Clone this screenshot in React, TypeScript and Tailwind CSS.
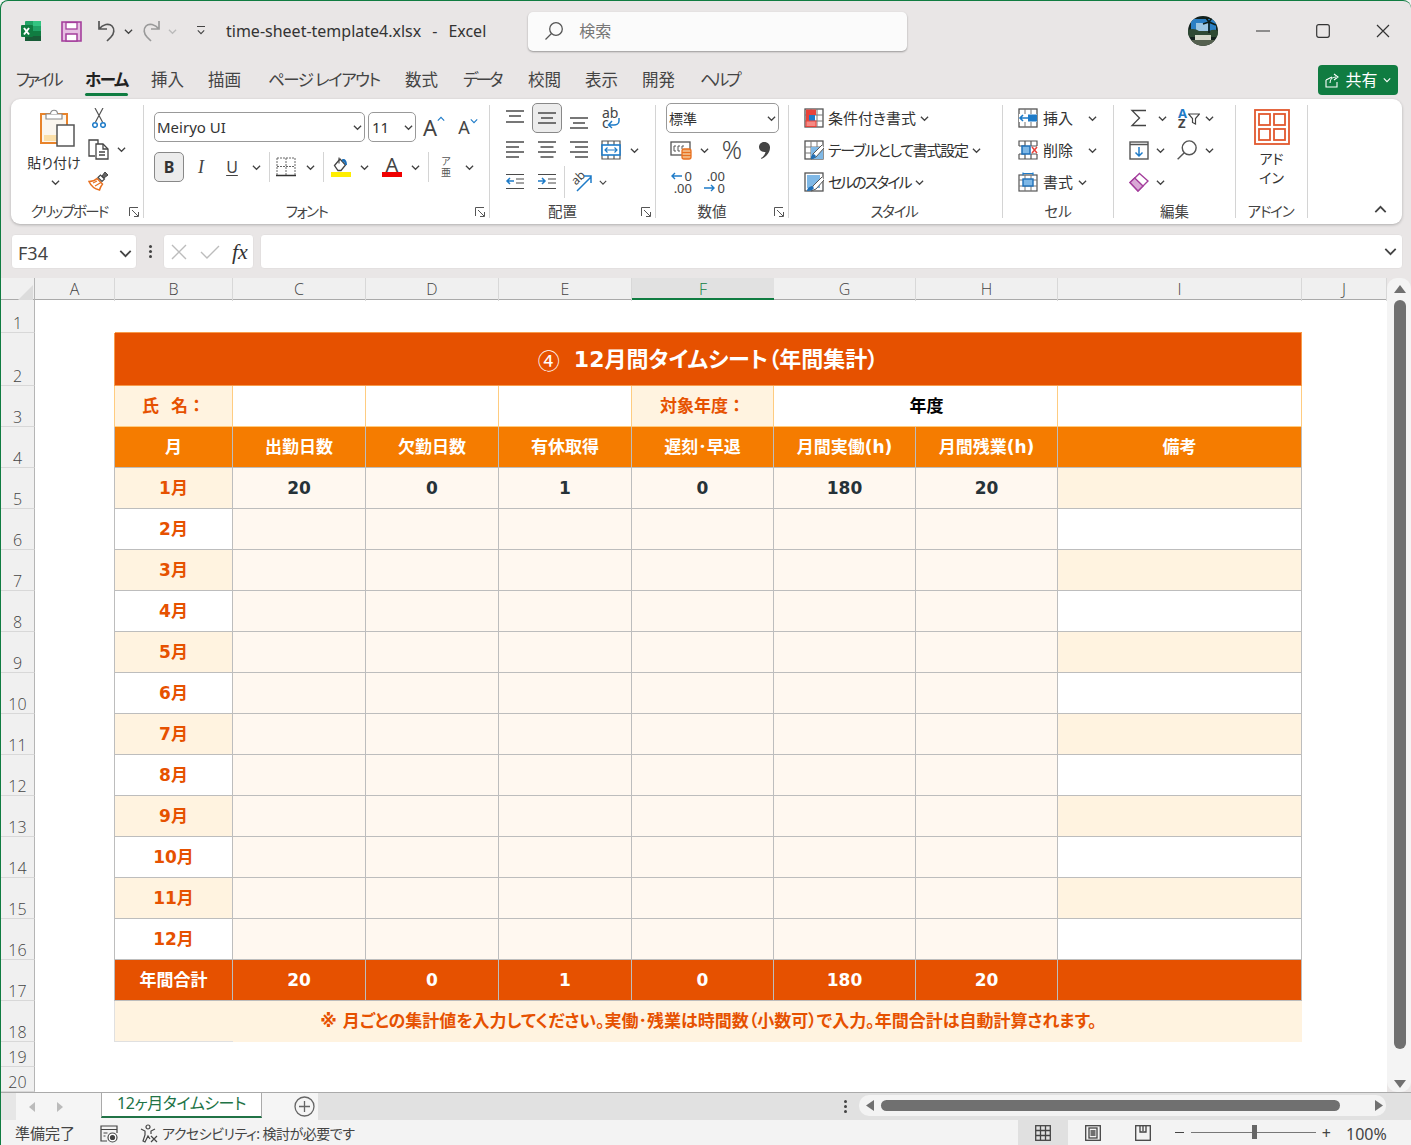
import React from 'react';

const gridCols = 'grid grid-cols-[34px_80px_118px_133px_133px_133px_142px_142px_142px_244px_85px]';
const cellFont = "font-['DejaVu_Sans','Noto_Sans_CJK_JP',sans-serif] font-bold";

const Chev = ({ up = false, w = 9, color = '#444' }: { up?: boolean; w?: number; color?: string }) => (
  <svg width={w} height={w} viewBox="0 0 10 10" fill="none" stroke={color} strokeWidth="1.4">
    <path d={up ? 'M1 7l4-4 4 4' : 'M1 3l4 4 4-4'} />
  </svg>
);

const Launcher = () => (
  <svg width="10" height="10" viewBox="0 0 10 10" fill="none" stroke="#555" strokeWidth="1">
    <path d="M.5 9V.5H9M3 3l6 6M5 9.5h4.500V5" />
  </svg>
);

const Lines = ({ rows }: { rows: [number, number, number][] }) => (
  <svg width="20" height="20" viewBox="0 0 20 20" stroke="#4a4a4a" strokeWidth="1.3">
    {rows.map(([y, x, w], i) => (
      <path key={i} d={`M${x} ${y}h${w}`} />
    ))}
  </svg>
);

const ExcelLogo = () => (
  <svg width="22" height="22" viewBox="0 0 22 22">
    <rect x="5" y="1" width="16" height="20" rx="1" fill="#21a366" />
    <rect x="13" y="1" width="8" height="5" fill="#33c481" />
    <rect x="13" y="11" width="8" height="5" fill="#107c41" />
    <rect x="5" y="11" width="8" height="5" fill="#185c37" />
    <rect x="5" y="16" width="16" height="5" fill="#185c37" />
    <rect x="1" y="5" width="12" height="12" rx="1" fill="#107c41" />
    <path d="M4 8l5 6.500M9 8l-5 6.500" stroke="#fff" strokeWidth="2" />
  </svg>
);

const SaveIcon = () => (
  <svg width="21" height="21" viewBox="0 0 21 21">
    <path d="M1 1h19v19H1z" fill="#e6bfe2" stroke="#a43e9c" strokeWidth="1.600" />
    <rect x="5" y="1.500" width="11" height="6.500" fill="#fff" stroke="#a43e9c" strokeWidth="1.300" />
    <rect x="5" y="13" width="11" height="7" fill="#fff" stroke="#a43e9c" strokeWidth="1.500" />
  </svg>
);

const Undo = ({ c }: { c: string }) => (
  <svg width="20" height="22" viewBox="0 0 20 22" fill="none" stroke={c} strokeWidth="1.700">
    <path d="M2 1v8h8M2 9c4-5 10-6 13-3 3 3 2 8-1 11l-4 4" />
  </svg>
);

const Redo = ({ c }: { c: string }) => (
  <svg width="20" height="22" viewBox="0 0 20 22" fill="none" stroke={c} strokeWidth="1.700">
    <path d="M18 1v8h-8M18 9c-4-5-10-6-13-3-3 3-2 8 1 11l4 4" />
  </svg>
);

const Magnifier = ({ size = 20, c = '#555' }: { size?: number; c?: string }) => (
  <svg width={size} height={size} viewBox="0 0 20 20" fill="none" stroke={c} strokeWidth="1.300">
    <circle cx="12" cy="8" r="6.300" />
    <path d="M7.500 12.500L1.500 18.500" />
  </svg>
);

const Avatar = () => (
  <svg width="30" height="30" viewBox="0 0 30 30">
    <clipPath id="av"><circle cx="15" cy="15" r="15" /></clipPath>
    <g clipPath="url(#av)">
      <rect width="30" height="30" fill="#14231f" />
      <rect x="3" y="3" width="25" height="13" fill="#2b7fc4" />
      <rect x="8" y="7" width="12" height="8" fill="#9cc6e2" />
      <path d="M0 14c5-2 8-1 11 1h10c3-1 6-2 9 0v6H0z" fill="#2e4a34" />
      <rect x="7" y="19" width="16" height="5" fill="#d5d8ca" />
      <path d="M3 24h24v6H3z" fill="#55604f" />
      <path d="M21 17V6M21 6l-6 2M21 6l7 3M21 6l3-4M21 6l-3-4" stroke="#0d1c16" strokeWidth="1.600" />
    </g>
  </svg>
);

const ShareIcon = () => (
  <svg width="15" height="15" viewBox="0 0 15 15" fill="none" stroke="#fff" strokeWidth="1.100">
    <path d="M1 7v7h11V9M1 7l6-3M5 10c0-4 3-6 6-6M9 1l4 3-4 3" />
  </svg>
);

const PasteIcon = () => (
  <svg width="36" height="39" viewBox="0 0 36 39">
    <rect x="1" y="5" width="26" height="29" fill="#fbf6ee" stroke="#e8832a" strokeWidth="2" />
    <rect x="4" y="26" width="13" height="6" fill="#fbdfa8" />
    <path d="M6 5h16v5H6z" fill="#fff" stroke="#8a8a8a" strokeWidth="1.200" />
    <path d="M10.500 5c0-5 7-5 7 0" fill="#fff" stroke="#8a8a8a" strokeWidth="1.200" />
    <rect x="17" y="16" width="17" height="21" fill="#fff" stroke="#555" strokeWidth="1.500" />
  </svg>
);

const Scissors = () => (
  <svg width="14" height="20" viewBox="0 0 14 20" fill="none">
    <path d="M3 0l7.500 14M11 0L3.500 14" stroke="#555" strokeWidth="1.200" />
    <circle cx="3" cy="17" r="2.300" stroke="#1e7bc8" strokeWidth="1.500" />
    <circle cx="11" cy="17" r="2.300" stroke="#1e7bc8" strokeWidth="1.500" />
  </svg>
);

const CopyIcon = () => (
  <svg width="21" height="21" viewBox="0 0 21 21" fill="none" stroke="#444" strokeWidth="1.300">
    <path d="M7 17H1V1h9v4" />
    <path d="M8 5h7l5 5v10H8z" fill="#fff" />
    <path d="M15 5v5h5M11 13h6M11 16h6" />
  </svg>
);

const Painter = () => (
  <svg width="21" height="20" viewBox="0 0 21 20">
    <path d="M1 10.500c3 0 6-1 8-3l5.500 5.500c-1.500 2-2.500 4-3 6C7 18 3 15 1 10.500z" fill="#fff" stroke="#e8701f" strokeWidth="1.500" />
    <path d="M7 15l6-3.500M5 12l4-2" stroke="#e8701f" strokeWidth="1.200" />
    <path d="M10 6.500l2.500-2.500 4 4-2.500 2.500z" fill="#fff" stroke="#444" strokeWidth="1.200" />
    <path d="M14 5l3-4 3 3-4 3z" fill="#666" stroke="#444" />
  </svg>
);

const BorderIcon = () => (
  <svg width="20" height="20" viewBox="0 0 20 20" fill="none" stroke="#666" strokeWidth="1" strokeDasharray="2 1">
    <path d="M1 1h18M1 1v17M19 1v17M10 1v17M1 9.500h18" />
    <path d="M0 18.500h20" stroke="#333" strokeWidth="1.400" strokeDasharray="none" />
  </svg>
);

const FillIcon = () => (
  <svg width="20" height="20" viewBox="0 0 20 20">
    <path d="M3.500 8.500L9 2l5.500 6-4.500 5.500H7z" fill="#fff" stroke="#444" strokeWidth="1.300" />
    <path d="M8 0.500v6" stroke="#444" strokeWidth="1.100" />
    <path d="M11 2.500c3-1.500 5 1.500 5 5.500h-2c0-2-1-3.500-3-3.500z" fill="#1e6fb8" />
    <rect y="15" width="20" height="5" fill="#ffee00" />
  </svg>
);

const WrapIcon = () => (
  <div className="relative w-[20px] h-[22px] font-['Noto_Sans',sans-serif] text-[14px] leading-[10px] text-[#444]">
    <div className="pl-[1px] pt-[1px]">ab</div>
    <div className="pl-[1px]">c</div>
    <svg className="absolute right-0 bottom-0" width="14" height="11" viewBox="0 0 14 11" fill="none" stroke="#1e7bc8" strokeWidth="1.500">
      <path d="M12 0v3c0 3-3 4-5 4H2M5 3L1.500 7 5 10" />
    </svg>
  </div>
);

const MergeIcon = () => (
  <svg width="20" height="20" viewBox="0 0 20 20" fill="none">
    <path d="M1 1h18v18H1zM7 1v4M13 1v4M7 15v4M13 15v4" stroke="#555" strokeWidth="1.200" />
    <rect x="1" y="5" width="18" height="10" fill="#fff" stroke="#1e7bc8" strokeWidth="1.600" />
    <path d="M4 10h12M6.500 7.500L4 10l2.500 2.500M13.500 7.500L16 10l-2.500 2.500" stroke="#1e7bc8" strokeWidth="1.200" />
  </svg>
);

const IndentIcon = ({ flip = false }: { flip?: boolean }) => (
  <svg width="20" height="20" viewBox="0 0 20 20" fill="none">
    <path d="M1 2.500h18M11 7h8M11 11h8M1 16.500h18" stroke="#4a4a4a" strokeWidth="1.200" />
    <path d={flip ? 'M1 9h7M5 6l3 3-3 3' : 'M9 9H2M5 6L2 9l3 3'} stroke="#1e7bc8" strokeWidth="1.500" />
  </svg>
);

const OrientIcon = () => (
  <div className="relative w-[22px] h-[22px]">
    <span className="absolute left-[0px] top-[1px] -rotate-45 text-[12px] leading-none text-[#444] font-['Noto_Sans',sans-serif]">ab</span>
    <svg className="absolute left-0 top-0" width="22" height="22" viewBox="0 0 22 22" fill="none" stroke="#1e7bc8" strokeWidth="1.500">
      <path d="M6 20L20 6M13 5h7v7" />
    </svg>
  </div>
);

const AccountIcon = () => (
  <svg width="22" height="20" viewBox="0 0 22 20" fill="none">
    <rect x="1" y="2" width="19" height="13" fill="#fff" stroke="#555" strokeWidth="1.300" />
    <path d="M6 6H4v5h2M10 6H8v5h2M14 6h-2v3" stroke="#555" strokeWidth="1" />
    <rect x="12" y="9" width="9" height="10" rx="2" fill="#f0b27a" stroke="#e8701f" strokeWidth="1.300" />
    <path d="M12 12.500h9M12 15.500h9" stroke="#e8701f" />
  </svg>
);

const CommaIcon = () => (
  <svg width="11" height="17" viewBox="0 0 11 17">
    <path d="M5 0c4 0 6 2.500 6 5.500C11 10 8 14.500 2.500 17L2 16c2.500-1.500 4-3.500 4.500-6C3 10.500 0 8.500 0 5.300 0 2.300 2 0 5 0z" fill="#444" />
  </svg>
);

const DecIcon = ({ inc = false }: { inc?: boolean }) => (
  <div className="relative w-[22px] h-[24px] font-['Noto_Sans',sans-serif] text-[13px] leading-[12px] text-[#444] text-right">
    <div>{inc ? '.00' : '0'}</div>
    <div>{inc ? '0' : '.00'}</div>
    <svg className="absolute left-0 top-[1px]" width="14" height="22" viewBox="0 0 14 22" fill="none" stroke="#1e7bc8" strokeWidth="1.400">
      {inc ? <path d="M1 17h10M8 14l3 3-3 3" /> : <path d="M12 5H2M5 2L2 5l3 3" />}
    </svg>
  </div>
);

const GridBase = () => (
  <>
    <rect x="1" y="1" width="18" height="18" fill="#fff" stroke="#555" strokeWidth="1.300" />
    <path d="M7 1v18M13 1v18M1 7h18M1 13h18" stroke="#777" strokeWidth="1" />
  </>
);

const CondIcon = () => (
  <svg width="20" height="20" viewBox="0 0 20 20">
    <GridBase />
    <rect x="2" y="1.500" width="10" height="5.500" fill="#e8423a" />
    <rect x="5" y="7" width="6" height="6" fill="#1e7bc8" />
    <rect x="2" y="7" width="3" height="6" fill="#e8423a" />
    <rect x="2" y="13" width="10" height="5.500" fill="#f58a84" stroke="#e8423a" />
  </svg>
);

const TableIcon = () => (
  <svg width="20" height="20" viewBox="0 0 20 20" fill="none">
    <GridBase />
    <path d="M7 7h12v12H7z" fill="#7fb8e6" />
    <path d="M18 5L9 14l-2 5 5-2 8-9" fill="#fff" stroke="#555" />
    <path d="M7 19c0-3 1-4 3-5l2 2c-1 2-2 3-5 3z" fill="#1e6fb8" />
  </svg>
);

const CellStyleIcon = () => (
  <svg width="20" height="20" viewBox="0 0 20 20" fill="none">
    <rect x="1" y="1" width="18" height="18" fill="#fff" stroke="#555" strokeWidth="1.300" />
    <rect x="3" y="3" width="13" height="13" fill="#7fb8e6" />
    <path d="M18 5L9 14l-2 5 5-2 8-9" fill="#fff" stroke="#555" />
    <path d="M3 19c0-3 2-4 5-5l2 2c-1 2-3 3-7 3z" fill="#1e6fb8" />
  </svg>
);

const InsertIcon = () => (
  <svg width="20" height="20" viewBox="0 0 20 20" fill="none">
    <GridBase />
    <rect x="1" y="6" width="18" height="8" fill="#fff" />
    <rect x="10" y="6.500" width="9" height="7" fill="#1e7bc8" />
    <path d="M10 10H2M5 7l-3 3 3 3" stroke="#1e7bc8" strokeWidth="1.600" />
  </svg>
);

const DeleteIcon = () => (
  <svg width="20" height="20" viewBox="0 0 20 20" fill="none">
    <path d="M1 6V1h18v5M1 14v5h18v-5M7 1v5M13 1v5M7 14v5M13 14v5M1 6h6M13 6h6M1 14h6M13 14h6" stroke="#555" strokeWidth="1.200" />
    <rect x="4" y="6" width="8" height="8" fill="#7fb8e6" stroke="#1e6fb8" strokeWidth="1.500" />
    <path d="M14 7l5 6M19 7l-5 6" stroke="#e8423a" strokeWidth="1.500" />
  </svg>
);

const FormatIcon = () => (
  <svg width="20" height="20" viewBox="0 0 20 20" fill="none">
    <rect x="1" y="3" width="18" height="16" fill="#fff" stroke="#555" strokeWidth="1.200" />
    <path d="M7 3v16M13 3v16M1 8h18M1 14h18" stroke="#777" />
    <rect x="5" y="7" width="10" height="7" fill="#7fb8e6" stroke="#1e6fb8" strokeWidth="1.400" />
    <path d="M5 1.500h10M5 .5v3M15 .5v3" stroke="#1e7bc8" strokeWidth="1.200" />
  </svg>
);

const SigmaIcon = () => (
  <svg width="18" height="18" viewBox="0 0 18 18" fill="none" stroke="#444" strokeWidth="1.300">
    <path d="M16 1.500H2L9.500 9 2 16.500h14" />
  </svg>
);

const SortIcon = () => (
  <div className="relative w-[20px] h-[21px] font-['Noto_Sans',sans-serif] font-bold text-[13px] leading-[10px]">
    <div className="text-[#1e7bc8]">A</div>
    <div className="text-[#444]">Z</div>
    <svg className="absolute right-[-2px] top-[5px]" width="12" height="12" viewBox="0 0 12 12" fill="none" stroke="#444" strokeWidth="1.200">
      <path d="M.5 1h11L7.500 5.500V11L4.500 9.500V5.500z" />
    </svg>
  </div>
);

const FillDownIcon = () => (
  <svg width="20" height="19" viewBox="0 0 20 19" fill="none">
    <rect x="1" y="1" width="18" height="17" fill="#fff" stroke="#555" strokeWidth="1.400" />
    <path d="M1 3.500h18" stroke="#555" strokeWidth="1.400" />
    <path d="M10 6v9M6.500 11.500L10 15l3.500-3.500" stroke="#1e7bc8" strokeWidth="1.500" />
  </svg>
);

const EraserIcon = () => (
  <svg width="20" height="20" viewBox="0 0 20 20">
    <path d="M10.500 1.500L19 9 9 19 1 10.500z" fill="#fff" stroke="#a43e9c" strokeWidth="1.400" />
    <path d="M5.700 6l8.300 8-5 5-8-8.500z" fill="#d9a8d5" stroke="#a43e9c" strokeWidth="1.400" />
  </svg>
);

const AddinIcon = () => (
  <svg width="36" height="36" viewBox="0 0 36 36" fill="none" stroke="#e2582e" strokeWidth="1.800">
    <rect x="1" y="1" width="34" height="34" />
    <rect x="5" y="5" width="11" height="11" />
    <rect x="20" y="5" width="11" height="11" />
    <rect x="5" y="20" width="11" height="11" />
    <rect x="20" y="20" width="11" height="11" />
  </svg>
);

const CameraIcon = () => (
  <svg width="18" height="18" viewBox="0 0 18 18" fill="none" stroke="#444" strokeWidth="1.200">
    <path d="M7 16H1V1h16v7M1 4.500h16M3.500 8h4M3.500 11h2" />
    <circle cx="12.500" cy="12.500" r="4.500" fill="#fff" />
    <circle cx="12.500" cy="12.500" r="2" fill="#444" />
  </svg>
);

const AccessIcon = () => (
  <svg width="20" height="19" viewBox="0 0 20 19" fill="none" stroke="#444" strokeWidth="1.200">
    <circle cx="8" cy="3" r="2" />
    <path d="M1 5l4 2v4l-2 6 2 1 3-6 2 3M15 5l-4 2v3M11 12l6 6M17 12l-6 6" />
  </svg>
);

const Btn = ({ w, children, className = '' }: { w: string; children?: React.ReactNode; className?: string }) => (
  <div className={`flex items-center justify-center shrink-0 h-full ${w} ${className}`}>{children}</div>
);

const Sep = () => <div className="w-px bg-[#d4d4d4] my-[6px] shrink-0" />;

const RowSep = ({ w }: { w: string }) => (
  <div className={`flex justify-center h-full shrink-0 ${w}`}>
    <div className="w-px h-full bg-[#d4d4d4]" />
  </div>
);

const GroupLabel = ({ children, launcher, className = '' }: { children: React.ReactNode; launcher?: boolean; className?: string }) => (
  <div className={`relative mt-auto mb-[3px] h-[18px] flex items-center justify-center text-[14.5px] text-[#444] whitespace-nowrap ${className}`}>
    {children}
    {launcher && <span className="absolute right-[4px] top-[4px] flex"><Launcher /></span>}
  </div>
);

const ClipboardGroup = () => (
  <div className="w-[132px] flex flex-col">
    <div className="flex h-[96px] pt-[10px]">
      <div className="w-[69px] pl-[20px] flex flex-col items-center">
        <div className="pl-[4px] h-[39px]"><PasteIcon /></div>
        <div className="mt-[5px] pr-[3px] text-[14px] leading-[20px] text-[#333] whitespace-nowrap">貼り付け</div>
        <div className="mt-[5px] flex"><Chev /></div>
      </div>
      <div className="flex flex-col">
        <div className="h-[20px] pl-[12px] flex items-center -mt-[1px]"><Scissors /></div>
        <div className="h-[21px] mt-[11px] pl-[8px] flex items-center gap-[8px]"><CopyIcon /><Chev /></div>
        <div className="h-[20px] mt-[11px] pl-[8px] flex items-center"><Painter /></div>
      </div>
    </div>
    <GroupLabel launcher className="pr-[16px] tracking-[-1.8px]">クリップボード</GroupLabel>
  </div>
);

const FontGroup = () => (
  <div className="w-[345px] flex flex-col pl-[10px]">
    <div className="flex items-center h-[30px] mt-[13px]">
      <div className="w-[211px] h-full border border-[#999] rounded-[5px] flex items-center justify-between pl-[2px] pr-[2px] text-[15px] text-[#333]">
        Meiryo UI<Chev />
      </div>
      <div className="w-[48px] h-full ml-[3px] border border-[#999] rounded-[5px] flex items-center justify-between pl-[3px] pr-[2px] text-[15px] text-[#333]">
        11<Chev />
      </div>
      <div className="w-[28px] ml-[4px] text-[#444] flex items-start justify-center font-['Noto_Sans',sans-serif] text-[22px] leading-none relative">
        A<span className="flex -mt-[1px]"><Chev up w={8} color="#1e7bc8" /></span>
      </div>
      <div className="w-[28px] ml-[6px] text-[#444] flex items-start justify-center font-['Noto_Sans',sans-serif] text-[18px] leading-none relative">
        A<span className="flex -mt-[1px]"><Chev w={8} color="#1e7bc8" /></span>
      </div>
    </div>
    <div className="flex items-center h-[30px] mt-[10px]">
      <Btn w="w-[30px]" className="bg-[#ececec] border border-[#888] rounded-[5px] font-bold text-[16px] text-[#333] font-['Noto_Sans',sans-serif]">B</Btn>
      <Btn w="w-[34px]" className="font-['Liberation_Serif',serif] italic text-[18px] text-[#444]">I</Btn>
      <Btn w="w-[28px]" className="underline underline-offset-2 text-[16px] text-[#444] font-['Noto_Sans',sans-serif]">U</Btn>
      <Btn w="w-[20px]"><Chev /></Btn>
      <RowSep w="w-[6px]" />
      <Btn w="w-[28px]"><BorderIcon /></Btn>
      <Btn w="w-[20px]"><Chev /></Btn>
      <RowSep w="w-[6px]" />
      <Btn w="w-[30px]"><FillIcon /></Btn>
      <Btn w="w-[16px]"><Chev /></Btn>
      <Btn w="w-[5px]" />
      <Btn w="w-[30px]">
        <div className="flex flex-col items-center w-[20px]">
          <span className="text-[20px] leading-[15px] text-[#444] font-['Noto_Sans',sans-serif]">A</span>
          <span className="w-full h-[5px] bg-[#f00000]" />
        </div>
      </Btn>
      <Btn w="w-[16px]"><Chev /></Btn>
      <Btn w="w-[10px]"><div className="w-px h-full bg-[#d4d4d4]" /></Btn>
      <Btn w="w-[26px]" className="flex-col text-[#555] text-[10px] leading-[11px]"><span>ア</span><span>亜</span></Btn>
      <Btn w="w-[20px]"><Chev /></Btn>
    </div>
    <GroupLabel launcher className="-ml-[10px] pr-[20px] tracking-[-1.5px]">フォント</GroupLabel>
  </div>
);

const alignL: [number, number, number][] = [[2, 1, 18], [7, 1, 13], [12, 1, 18], [17, 1, 13]];
const alignC: [number, number, number][] = [[2, 1, 18], [7, 3.500, 13], [12, 1, 18], [17, 3.500, 13]];
const alignR: [number, number, number][] = [[2, 1, 18], [7, 6, 13], [12, 1, 18], [17, 6, 13]];

const AlignGroup = () => (
  <div className="w-[165px] flex flex-col pl-[9px] pt-[3px]">
    <div className="flex items-center h-[32px]">
      <Btn w="w-[32px]"><Lines rows={[[3, 1, 18], [8, 4, 12], [14, 1, 18]]} /></Btn>
      <Btn w="w-[32px]"><div className="w-[30px] h-[30px] flex items-center justify-center bg-[#ececec] border border-[#888] rounded-[5px]"><Lines rows={[[5, 1, 18], [10, 4, 12], [15, 1, 18]]} /></div></Btn>
      <Btn w="w-[32px]" className="pt-[5px]"><Lines rows={[[7, 1, 18], [12, 4, 12], [17, 1, 18]]} /></Btn>
      <Btn w="w-[32px]"><WrapIcon /></Btn>
    </div>
    <div className="flex items-center h-[32px]">
      <Btn w="w-[32px]"><Lines rows={alignL} /></Btn>
      <Btn w="w-[32px]"><Lines rows={alignC} /></Btn>
      <Btn w="w-[32px]"><Lines rows={alignR} /></Btn>
      <Btn w="w-[32px]"><MergeIcon /></Btn>
      <Btn w="w-[14px]"><Chev /></Btn>
    </div>
    <div className="flex items-center h-[32px]">
      <Btn w="w-[32px]"><IndentIcon /></Btn>
      <Btn w="w-[32px]"><IndentIcon flip /></Btn>
      <RowSep w="w-[2px]" />
      <Btn w="w-[34px]"><OrientIcon /></Btn>
      <Btn w="w-[8px]"><Chev /></Btn>
    </div>
    <GroupLabel launcher className="-ml-[9px] pr-[20px]">配置</GroupLabel>
  </div>
);

const NumberGroup = () => (
  <div className="w-[132px] flex flex-col pl-[10px] pt-[4px]">
    <div className="w-[113px] h-[30px] border border-[#999] rounded-[5px] flex items-center justify-between pl-[2px] pr-[2px] text-[14px] text-[#333]">
      標準<Chev />
    </div>
    <div className="flex items-center h-[32px] mt-[1px]">
      <Btn w="w-[30px]"><AccountIcon /></Btn>
      <Btn w="w-[16px]"><Chev /></Btn>
      <Btn w="w-[40px]" className="text-[25px] text-[#444] font-['Noto_Sans',sans-serif] font-light">%</Btn>
      <Btn w="w-[24px]"><CommaIcon /></Btn>
    </div>
    <div className="flex items-center h-[32px]">
      <Btn w="w-[30px]"><DecIcon /></Btn>
      <Btn w="w-[2px]" />
      <Btn w="w-[32px]"><DecIcon inc /></Btn>
    </div>
    <GroupLabel launcher className="-ml-[10px] pr-[20px]">数値</GroupLabel>
  </div>
);

const StyleRow = ({ icon, label, track = '' }: { icon: React.ReactNode; label: string; track?: string }) => (
  <div className="flex items-center h-[32px] gap-[4px] whitespace-nowrap text-[15px] text-[#333]">
    {icon}
    <span className={track}>{label}</span>
    <Chev />
  </div>
);

const StyleGroup = () => (
  <div className="w-[213px] flex flex-col pl-[15px] pt-[3px]">
    <StyleRow icon={<CondIcon />} label="条件付き書式" />
    <StyleRow icon={<TableIcon />} label="テーブルとして書式設定" track="tracking-[-1.3px]" />
    <StyleRow icon={<CellStyleIcon />} label="セルのスタイル" track="tracking-[-2px]" />
    <GroupLabel className="-ml-[15px] pr-[3px] tracking-[-1.2px]">スタイル</GroupLabel>
  </div>
);

const CellRow = ({ icon, label, gap }: { icon: React.ReactNode; label: string; gap: string }) => (
  <div className="flex items-center h-[32px] text-[15px] text-[#333] whitespace-nowrap">
    {icon}
    <span className="ml-[5px]">{label}</span>
    <span className={`flex ${gap}`}><Chev /></span>
  </div>
);

const CellsGroup = () => (
  <div className="w-[110px] flex flex-col pl-[15px] pt-[3px]">
    <CellRow icon={<InsertIcon />} label="挿入" gap="ml-[15px]" />
    <CellRow icon={<DeleteIcon />} label="削除" gap="ml-[15px]" />
    <CellRow icon={<FormatIcon />} label="書式" gap="ml-[5px]" />
    <GroupLabel className="-ml-[15px]">セル</GroupLabel>
  </div>
);

const EditGroup = () => (
  <div className="w-[121px] flex flex-col pl-[15px] pt-[3px]">
    <div className="flex items-center h-[32px]">
      <Btn w="w-[20px]"><SigmaIcon /></Btn>
      <Btn w="w-[26px]"><Chev /></Btn>
      <Btn w="w-[24px]" className="pl-[2px]"><SortIcon /></Btn>
      <Btn w="w-[20px]"><Chev /></Btn>
    </div>
    <div className="flex items-center h-[32px]">
      <Btn w="w-[20px]"><FillDownIcon /></Btn>
      <Btn w="w-[22px]"><Chev /></Btn>
      <Btn w="w-[28px]" className="pl-[4px]"><Magnifier size={22} /></Btn>
      <Btn w="w-[20px]"><Chev /></Btn>
    </div>
    <div className="flex items-center h-[32px]">
      <Btn w="w-[20px]"><EraserIcon /></Btn>
      <Btn w="w-[22px]"><Chev /></Btn>
    </div>
    <GroupLabel className="-ml-[15px]">編集</GroupLabel>
  </div>
);

const AddinGroup = () => (
  <div className="w-[71px] flex flex-col items-center pt-[10px]">
    <AddinIcon />
    <div className="mt-[4px] text-center text-[14px] leading-[19px] text-[#333]">アド<br />イン</div>
    <GroupLabel className="w-full pr-[2px] tracking-[-1.2px]">アドイン</GroupLabel>
  </div>
);

const Ribbon = () => (
  <div className="flex h-[125px] ml-[11px] bg-white rounded-[9px] shadow-[0_1px_3px_rgba(0,0,0,0.25)] w-[1391px]">
    <ClipboardGroup />
    <Sep />
    <FontGroup />
    <Sep />
    <AlignGroup />
    <Sep />
    <NumberGroup />
    <Sep />
    <StyleGroup />
    <Sep />
    <CellsGroup />
    <Sep />
    <EditGroup />
    <Sep />
    <AddinGroup />
    <Sep />
    <div className="flex-1 flex justify-end items-end pr-[15px] pb-[8px]"><Chev up w={13} /></div>
  </div>
);

const TitleBar = () => (
  <div className="flex items-center h-[60px] pl-[19px]">
    <ExcelLogo />
    <span className="ml-[19px] flex"><SaveIcon /></span>
    <span className="ml-[15px] flex"><Undo c="#555" /></span>
    <span className="ml-[7px] flex"><Chev /></span>
    <span className="ml-[8px] flex"><Redo c="#9a9a9a" /></span>
    <span className="ml-[7px] flex"><Chev color="#bbb" /></span>
    <span className="ml-[20px] flex flex-col items-center">
      <span className="w-[8px] h-px bg-[#444] mb-[1px]" />
      <Chev w={8} />
    </span>
    <span className="ml-[21px] text-[16px] text-[#333] whitespace-nowrap">time-sheet-template4.xlsx</span>
    <span className="ml-[11px] text-[16px] text-[#333]">-</span>
    <span className="ml-[11px] text-[16px] text-[#333]">Excel</span>
    <div className="ml-[42px] w-[379px] h-[39px] bg-[#fbfbfb] rounded-[5px] shadow-[0_1px_2px_rgba(0,0,0,0.35)] flex items-center pl-[16px] text-[16px] text-[#777]">
      <Magnifier />
      <span className="ml-[15px]">検索</span>
    </div>
    <div className="ml-[281px] flex"><Avatar /></div>
    <svg className="ml-[38px]" width="14" height="2" viewBox="0 0 14 2"><path d="M0 1h14" stroke="#333" strokeWidth="1.200" /></svg>
    <svg className="ml-[46px]" width="14" height="14" viewBox="0 0 14 14" fill="none"><rect x=".7" y=".7" width="12.600" height="12.600" rx="2" stroke="#333" strokeWidth="1.200" /></svg>
    <svg className="ml-[46px]" width="14" height="14" viewBox="0 0 14 14" fill="none"><path d="M1 1l12 12M13 1L1 13" stroke="#333" strokeWidth="1.200" /></svg>
  </div>
);

const tabs = [
  { t: 'ファイル', c: 'w-[69px] tracking-[-3.2px]' },
  { t: 'ホーム', c: 'w-[66px] tracking-[-1.5px] font-bold text-[#222]' },
  { t: '挿入', c: 'w-[57px]' },
  { t: '描画', c: 'w-[60px]' },
  { t: 'ページ レイアウト', c: 'w-[137px] tracking-[-1.5px]' },
  { t: '数式', c: 'w-[58px]' },
  { t: 'データ', c: 'w-[65px] tracking-[-2.8px]' },
  { t: '校閲', c: 'w-[57px]' },
  { t: '表示', c: 'w-[57px]' },
  { t: '開発', c: 'w-[58px]' },
  { t: 'ヘルプ', c: 'w-[60px] tracking-[-2.8px]' },
];

const TabBar = () => (
  <div className="flex items-center h-[38px] pl-[15px] pr-[13px] text-[16.5px] text-[#444]">
    <div className="flex">
      {tabs.map(({ t, c }) => (
        <div key={t} className={`whitespace-nowrap ${c}`}>
          <span className="relative inline-block">
            {t}
            {t === 'ホーム' && <span className="absolute left-0 right-0 bottom-[-4px] h-[3px] rounded-sm bg-[#107c41]" />}
          </span>
        </div>
      ))}
    </div>
    <div className="ml-auto w-[80px] h-[30px] rounded-[4px] bg-[#107c41] text-white text-[16px] flex items-center justify-center gap-[5px]">
      <ShareIcon />
      <span>共有</span>
      <Chev w={8} color="#fff" />
    </div>
  </div>
);

const FormulaBar = () => (
  <div className="flex h-[35px] mt-[10px] pl-[11px] pr-[8px]">
    <div className="w-[126px] bg-white rounded-[4px] border border-[#e3e0e0] flex items-center justify-between pl-[6px] pr-[4px] pt-[3px] text-[18px] text-[#444]">
      F34<Chev w={13} />
    </div>
    <div className="w-[26px] flex flex-col items-center justify-center gap-[2px]">
      <span className="w-[3px] h-[3px] bg-[#444] rounded-full" />
      <span className="w-[3px] h-[3px] bg-[#444] rounded-full" />
      <span className="w-[3px] h-[3px] bg-[#444] rounded-full" />
    </div>
    <div className="w-[91px] bg-white rounded-[4px] border border-[#e3e0e0] flex items-center pl-[7px]">
      <svg width="16" height="16" viewBox="0 0 16 16" fill="none" stroke="#bcbcbc" strokeWidth="1.400"><path d="M1 1l14 14M15 1L1 15" /></svg>
      <svg className="ml-[13px]" width="20" height="14" viewBox="0 0 20 14" fill="none" stroke="#bcbcbc" strokeWidth="1.400"><path d="M1 7l6 6L19 1" /></svg>
      <span className="ml-[12px] font-['Liberation_Serif',serif] italic text-[22px] text-[#333]">fx</span>
    </div>
    <div className="ml-[6px] flex-1 bg-white rounded-[4px] border border-[#e3e0e0] flex items-center justify-end pr-[5px]">
      <Chev w={13} />
    </div>
  </div>
);

const colHeads = ['A', 'B', 'C', 'D', 'E', 'F', 'G', 'H', 'I', 'J'];

const ColHeader = () => (
  <div className={`${gridCols} h-[22px] bg-[#f0f0f0] border-b border-[#aaa] text-[16px] leading-[23px] text-[#444] font-light font-['Open_Sans',sans-serif]`}>
    <div className="relative border-r border-[#b5b5b5]">
      <svg className="absolute right-[1px] bottom-[1px]" width="15" height="15" viewBox="0 0 15 15"><path d="M15 0v15H0z" fill="#dcdcdc" /></svg>
    </div>
    {colHeads.map((c) => (
      <div key={c} className={c === 'F' ? 'text-center bg-[#e1e1e1] border-b-2 border-[#107c41] h-[22px] text-[#107c41]' : 'text-center border-r border-[#d8d8d8]'}>{c}</div>
    ))}
  </div>
);

const RowNo = ({ n }: { n: number }) => (
  <div className="flex items-end justify-center bg-[#f0f0f0] border-r border-b border-r-[#b5b5b5] border-b-[#d8d8d8] text-[16px] leading-[18px] text-[#444] font-light font-['Open_Sans',sans-serif]">
    {n}
  </div>
);

const Cell = ({ className = '', children }: { className?: string; children?: React.ReactNode }) => (
  <div className={`flex items-center justify-center border-r border-b pt-[1px] whitespace-nowrap ${cellFont} ${className}`}>{children}</div>
);

const Gutter = ({ border = 'border-[#bdbdbd]' }: { border?: string }) => <div className={`border-r ${border}`} />;

const months = ['1月', '2月', '3月', '4月', '5月', '6月', '7月', '8月', '9月', '10月', '11月', '12月'];
const heads = ['出勤日数', '欠勤日数', '有休取得', '遅刻･早退', '月間実働(h)', '月間残業(h)', '備考'];
const jan = ['20', '0', '1', '0', '180', '20'];
const totals = ['20', '0', '1', '0', '180', '20', ''];

const Sheet = () => (
  <div className="w-[1386px] bg-white">
    <ColHeader />
    <div className={`${gridCols} h-[33px]`}>
      <RowNo n={1} />
      <div />
      <div className="col-span-8 border-b border-[#f79b4b]" />
      <div />
    </div>
    <div className={`${gridCols} h-[53px]`}>
      <RowNo n={2} />
      <Gutter border="border-[#f79b4b]" />
      <Cell className="col-span-8 bg-[#e65100] border-[#f79b4b] text-white text-[22px] pt-[1px]">
        <span className="font-['Noto_Sans_CJK_JP',sans-serif] font-normal mr-[14px]">④</span>
        12月間タイムシート（年間集計）
      </Cell>
      <div />
    </div>
    <div className={`${gridCols} h-[41px]`}>
      <RowNo n={3} />
      <Gutter border="border-[#ffcc80]" />
      <Cell className="bg-[#fff3e0] border-[#ffcc80] text-[#e65100] text-[17px] [font-feature-settings:normal]">氏&nbsp;&nbsp;名：</Cell>
      <Cell className="border-[#ffcc80]" />
      <Cell className="border-[#ffcc80]" />
      <Cell className="border-[#ffcc80]" />
      <Cell className="bg-[#fff3e0] border-[#ffcc80] text-[#e65100] text-[17px] [font-feature-settings:normal]">対象年度：</Cell>
      <Cell className="col-span-2 border-[#ffcc80] text-black text-[17px] pl-[22px]">年度</Cell>
      <Cell className="border-[#ffcc80]" />
      <div />
    </div>
    <div className={`${gridCols} h-[41px]`}>
      <RowNo n={4} />
      <Gutter />
      <Cell className="bg-[#f57c00] border-[#bdbdbd] text-white text-[17px]">月</Cell>
      {heads.map((h) => (
        <Cell key={h} className="bg-[#f57c00] border-[#bdbdbd] text-white text-[17px]">{h}</Cell>
      ))}
      <div />
    </div>
    {months.map((m, i) => (
      <div key={m} className={`${gridCols} h-[41px]`}>
        <RowNo n={i + 5} />
        <Gutter />
        <Cell className={`border-[#bdbdbd] text-[#e65100] text-[17px] ${i % 2 === 0 ? 'bg-[#fff3e0]' : 'bg-white'}`}>{m}</Cell>
        {[0, 1, 2, 3, 4, 5].map((c) => (
          <Cell key={c} className="bg-[#fff8f0] border-[#bdbdbd] text-[#263238] text-[17px]">{i === 0 ? jan[c] : ''}</Cell>
        ))}
        <Cell className={`border-[#bdbdbd] ${i % 2 === 0 ? 'bg-[#fff3e0]' : 'bg-white'}`} />
        <div />
      </div>
    ))}
    <div className={`${gridCols} h-[41px]`}>
      <RowNo n={17} />
      <Gutter />
      <Cell className="bg-[#e65100] border-[#bdbdbd] text-white text-[17px]">年間合計</Cell>
      {totals.map((t, i) => (
        <Cell key={i} className="bg-[#e65100] border-[#bdbdbd] text-white text-[17px]">{t}</Cell>
      ))}
      <div />
    </div>
    <div className={`${gridCols} h-[41px]`}>
      <RowNo n={18} />
      <Gutter border="border-[#e0e0e0]" />
      <div className={`relative col-span-8 flex items-center justify-center bg-[#fff3e0] text-[#e65100] text-[17px] whitespace-nowrap ${cellFont}`}>
        ※ 月ごとの集計値を入力してください。実働･残業は時間数（小数可）で入力。年間合計は自動計算されます。
        <span className="absolute left-0 bottom-0 w-[118px] h-px bg-[#e0e0e0]" />
      </div>
      <div />
    </div>
    <div className={`${gridCols} h-[25px]`}>
      <RowNo n={19} />
    </div>
    <div className={`${gridCols} h-[25px]`}>
      <RowNo n={20} />
    </div>
  </div>
);

const VScroll = () => (
  <div className="w-[24px] h-[814px] bg-[#f4f4f4] rounded-[10px] flex flex-col items-center pt-[7px] pl-[1px]">
    <svg width="12" height="8" viewBox="0 0 12 8"><path d="M6 0l6 8H0z" fill="#707070" /></svg>
    <div className="w-[12px] h-[749px] mt-[7px] rounded-[6px] bg-[#707070] shrink-0" />
    <svg className="mt-[31px] shrink-0" width="12" height="8" viewBox="0 0 12 8"><path d="M6 8L0 0h12z" fill="#707070" /></svg>
  </div>
);

const SheetTabs = () => (
  <div className="flex h-[28px] bg-[#e1e1e1] border-t border-[#aaa]">
    <div className="w-[15px] bg-[#e6e6e6]" />
    <div className="w-[85px] bg-[#f5f5f5] flex items-center pl-[13px] gap-[22px]">
      <svg width="6" height="10" viewBox="0 0 6 10"><path d="M6 0v10L0 5z" fill="#bbb" /></svg>
      <svg width="6" height="10" viewBox="0 0 6 10"><path d="M0 0v10l6-5z" fill="#bbb" /></svg>
    </div>
    <div className="w-[161px] bg-[#f5f5f5]">
      <div className="-mt-px h-[26px] bg-white border-x border-t border-[#aaa] border-b-2 border-b-[#217346] flex items-center justify-center pb-[4px] text-[16px] tracking-[-0.4px] text-[#217346] whitespace-nowrap">
        12ヶ月タイムシート
      </div>
    </div>
    <div className="w-[56px] bg-[#f5f5f5] flex items-center justify-center pl-[28px]">
      <svg width="21" height="21" viewBox="0 0 21 21" fill="none" stroke="#666" strokeWidth="1.300"><circle cx="10.500" cy="10.500" r="9.500" /><path d="M10.500 5v11M5 10.500h11" /></svg>
    </div>
    <div className="flex-1 flex items-center justify-end">
      <div className="flex flex-col gap-[2px] mr-[12px]">
        <span className="w-[3px] h-[3px] bg-[#444] rounded-full" />
        <span className="w-[3px] h-[3px] bg-[#444] rounded-full" />
        <span className="w-[3px] h-[3px] bg-[#444] rounded-full" />
      </div>
    </div>
    <div className="w-[527px] h-[21px] mt-[2px] mr-[25px] rounded-[10px] bg-[#f3f3f3] flex items-center pl-[7px]">
      <svg width="8" height="11" viewBox="0 0 8 11"><path d="M8 0v11L0 5.500z" fill="#707070" /></svg>
      <div className="w-[459px] h-[11px] ml-[7px] rounded-[6px] bg-[#707070]" />
      <svg className="ml-[35px]" width="8" height="11" viewBox="0 0 8 11"><path d="M0 0v11l8-5.500z" fill="#707070" /></svg>
    </div>
  </div>
);

const StatusBar = () => (
  <div className="flex items-center h-[25px] bg-[#f3f3f3] text-[14px] text-[#444] pl-[14px] pt-[2px] whitespace-nowrap">
    <span className="text-[15px]">準備完了</span>
    <span className="ml-[25px] flex"><CameraIcon /></span>
    <span className="ml-[22px] flex"><AccessIcon /></span>
    <span className="ml-[2px] tracking-[-0.5px]">アクセシビリティ: 検討が必要です</span>
    <div className="ml-auto flex items-center h-[25px] -mt-[2px]">
      <div className="w-[50px] h-full bg-[#e0e0e0] flex items-center justify-center">
        <svg width="16" height="16" viewBox="0 0 16 16" fill="none" stroke="#444" strokeWidth="1.300"><rect x=".7" y=".7" width="14.600" height="14.600" /><path d="M5.500 1v14M10.500 1v14M1 5.500h14M1 10.500h14" /></svg>
      </div>
      <div className="w-[50px] flex items-center justify-center">
        <svg width="16" height="16" viewBox="0 0 16 16" fill="none" stroke="#444" strokeWidth="1.300"><rect x=".7" y=".7" width="14.600" height="14.600" /><rect x="4" y="3" width="8" height="10" /><path d="M5.500 6h5M5.500 8h5M5.500 10h5" /></svg>
      </div>
      <div className="w-[50px] flex items-center justify-center">
        <svg width="16" height="16" viewBox="0 0 16 16" fill="none" stroke="#444" strokeWidth="1.300"><rect x=".7" y=".7" width="14.600" height="14.600" /><path d="M5 1v6h6V1M8 1v5" /></svg>
      </div>
      <span className="ml-[7px] w-[9px] h-px bg-[#444]" />
      <div className="relative ml-[7px] w-[125px] h-px bg-[#777]">
        <span className="absolute left-[61px] -top-[7px] w-[5px] h-[14px] bg-[#666]" />
      </div>
      <span className="ml-[6px] text-[16px] leading-none">+</span>
      <span className="ml-[15px] w-[65px] text-[16px] pt-[2px]">100%</span>
    </div>
  </div>
);

export default function App() {
  return (
    <div className="w-[1411px] h-[1145px] overflow-hidden bg-[#f3f3f3] font-['Noto_Sans','Noto_Sans_CJK_JP',sans-serif] [font-feature-settings:'palt']">
      <div className="h-full bg-[#e9e6e6] border-t border-l border-[#107c41] rounded-t-[8px] overflow-hidden">
        <TitleBar />
        <TabBar />
        <div className="-ml-px">
          <Ribbon />
        </div>
        <div className="-ml-px">
          <FormulaBar />
        </div>
        <div className="flex mt-[9px]">
          <Sheet />
          <VScroll />
        </div>
        <SheetTabs />
        <StatusBar />
      </div>
    </div>
  );
}
